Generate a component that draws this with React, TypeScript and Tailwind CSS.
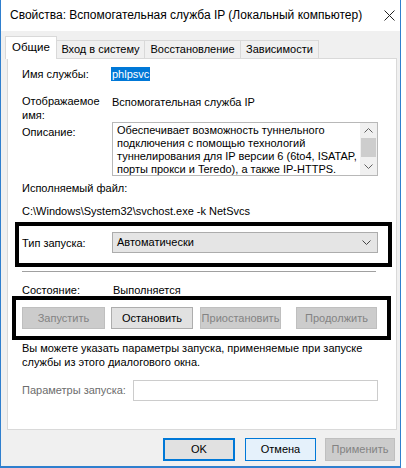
import React from "react";

const FONT = "font-['Segoe_UI','Liberation_Sans',Arial,sans-serif]";

function WinButton({
  label,
  width,
  variant = "normal",
}: {
  label: string;
  width: string;
  variant?: "normal" | "disabled" | "default" | "hover";
}) {
  const styles = {
    normal: "bg-[#e1e1e1] border border-[#adadad] text-black",
    disabled: "bg-[#cccccc] border border-[#bfbfbf] text-[#838383]",
    default: "bg-[#e1e1e1] border-2 border-[#0078d7] text-black",
    hover: "bg-[#e5f1fb] border border-[#0078d7] text-black",
  }[variant];
  return (
    <div className={`${width} h-full flex items-center justify-center text-[11px] ${styles}`}>
      {label}
    </div>
  );
}

function ChevronDown({ className = "" }: { className?: string }) {
  return (
    <svg width="9" height="5" viewBox="0 0 9 5" className={className}>
      <path d="M0.5 0.5 L4.5 4.5 L8.5 0.5" fill="none" stroke="currentColor" strokeWidth="1" />
    </svg>
  );
}

function ChevronUp({ className = "" }: { className?: string }) {
  return (
    <svg width="9" height="5" viewBox="0 0 9 5" className={className}>
      <path d="M0.5 4.5 L4.5 0.5 L8.5 4.5" fill="none" stroke="currentColor" strokeWidth="1" />
    </svg>
  );
}

export default function App() {
  return (
    <div className={`w-[406px] h-[468px] bg-white ${FONT} text-[11px] leading-[15px] text-black`}>
      <div className="w-[401px] h-[468px] border-x border-b-2 border-[#2f7fce] bg-[#f0f0f0] flex flex-col">
        {/* Title bar */}
        <div className="h-[31px] bg-white flex items-center pl-[9px] pr-[5px] shrink-0">
          <span className="flex-1 text-[12px] whitespace-nowrap">
            Свойства: Вспомогательная служба IP (Локальный компьютер)
          </span>
          <svg width="11" height="11" viewBox="0 0 11 11">
            <path d="M0.5 0.5 L10.5 10.5 M10.5 0.5 L0.5 10.5" stroke="#222" strokeWidth="1" />
          </svg>
        </div>

        {/* Tabs */}
        <div className="h-[27px] flex items-end pl-[4px] shrink-0 relative z-10 whitespace-nowrap">
          <div className="h-[23px] w-[52px] bg-white border-t border-x border-[#d9d9d9] flex items-center justify-center pb-[1px] mb-[-1px] text-[11.5px]">
            Общие
          </div>
          <div className="h-[18px] w-[88px] border-t border-r border-[#d9d9d9] flex items-center justify-center">
            Вход в систему
          </div>
          <div className="h-[18px] w-[96px] border-t border-r border-[#d9d9d9] flex items-center justify-center">
            Восстановление
          </div>
          <div className="h-[18px] w-[78px] border-t border-r border-[#d9d9d9] flex items-center justify-center">
            Зависимости
          </div>
        </div>

        {/* Panel */}
        <div className="ml-[6px] w-[390px] h-[372px] bg-white border border-[#d9d9d9] shrink-0 flex flex-col whitespace-nowrap">
          {/* Имя службы */}
          <div className="mt-[8px] pl-[14px] flex h-[15px]">
            <span className="w-[90px]">Имя службы:</span>
            <span className="bg-[#0078d7] text-white h-[14px] leading-[14px] px-[1px] -ml-[1px]">phlpsvc</span>
          </div>

          {/* Отображаемое имя */}
          <div className="mt-[12px] pl-[14px] flex h-[28px] leading-[14px]">
            <span className="w-[90px]">
              Отображаемое
              <br />
              имя:
            </span>
            <span className="pt-[1px]">Вспомогательная служба IP</span>
          </div>

          {/* Описание */}
          <div className="pl-[14px] flex h-[54px]">
            <span className="w-[90px] pt-[3px]">Описание:</span>
            <div className="w-[266px] h-[54px] border border-[#b8b8b8] bg-white flex">
              <div className="flex-1 pl-[4px] pt-[1px] leading-[13px] overflow-hidden">
                Обеспечивает возможность туннельного
                <br />
                подключения с помощью технологий
                <br />
                туннелирования для IP версии 6 (6to4, ISATAP,
                <br />
                порты прокси и Teredo), а также IP-HTTPS.
              </div>
              <div className="w-[17px] flex flex-col items-center bg-[#f0f0f0] text-[#606060]">
                <div className="h-[15px] flex items-center justify-center">
                  <ChevronUp />
                </div>
                <div className="w-[15px] h-[19px] bg-[#cdcdcd]" />
                <div className="flex-1 flex items-center justify-center">
                  <ChevronDown />
                </div>
              </div>
            </div>
          </div>

          {/* Исполняемый файл */}
          <div className="mt-[5px] pl-[14px] h-[15px]">Исполняемый файл:</div>
          <div className="mt-[8px] pl-[14px] h-[15px]">C:\Windows\System32\svchost.exe -k NetSvcs</div>

          {/* Тип запуска (выделено) */}
          <div className="mt-[3px] ml-[7px] w-[377px] h-[45px] border-4 border-black flex items-start">
            <span className="w-[93px] pl-[3px] pt-[10px]">Тип запуска:</span>
            <div className="mt-[6px] w-[266px] h-[21px] bg-[#e5e5e5] border border-[#acacac] flex items-center pl-[4px] pr-[6px]">
              <span className="flex-1">Автоматически</span>
              <ChevronDown className="text-[#444]" />
            </div>
          </div>

          {/* Разделитель */}
          <div className="mt-[4px] ml-[14px] w-[354px] border-t border-[#a0a0a0] border-b border-b-white" />

          {/* Состояние */}
          <div className="mt-[11px] pl-[14px] flex h-[12px] leading-[12px]">
            <span className="w-[91px]">Состояние:</span>
            <span>Выполняется</span>
          </div>

          {/* Кнопки управления (выделено) */}
          <div className="ml-[4px] w-[379px] h-[44px] border-4 border-black pt-[7px] pl-[6px]">
            <div className="h-[22px] flex">
              <WinButton label="Запустить" width="w-[83px]" variant="disabled" />
              <div className="w-[6px]" />
              <WinButton label="Остановить" width="w-[82px]" />
              <div className="w-[7px]" />
              <WinButton label="Приостановить" width="w-[81px]" variant="disabled" />
              <div className="w-[15px]" />
              <WinButton label="Продолжить" width="w-[81px]" variant="disabled" />
            </div>
          </div>

          {/* Пояснение */}
          <div className="mt-[1px] pl-[14px] pr-[10px] leading-[14px]">
            Вы можете указать параметры запуска, применяемые при запуске
            <br />
            службы из этого диалогового окна.
          </div>

          {/* Параметры запуска */}
          <div className="mt-[11px] pl-[14px] flex items-center h-[21px]">
            <span className="w-[111px] text-[#6d6d6d]">Параметры запуска:</span>
            <div className="w-[245px] h-[21px] border border-[#cccccc] bg-white" />
          </div>
        </div>

        {/* Нижние кнопки */}
        <div className="mt-[8px] h-[23px] flex pl-[162px]">
          <WinButton label="OK" width="w-[72px]" variant="default" />
          <div className="w-[10px]" />
          <WinButton label="Отмена" width="w-[71px]" variant="hover" />
          <div className="w-[9px]" />
          <WinButton label="Применить" width="w-[70px]" variant="disabled" />
        </div>
      </div>
    </div>
  );
}
